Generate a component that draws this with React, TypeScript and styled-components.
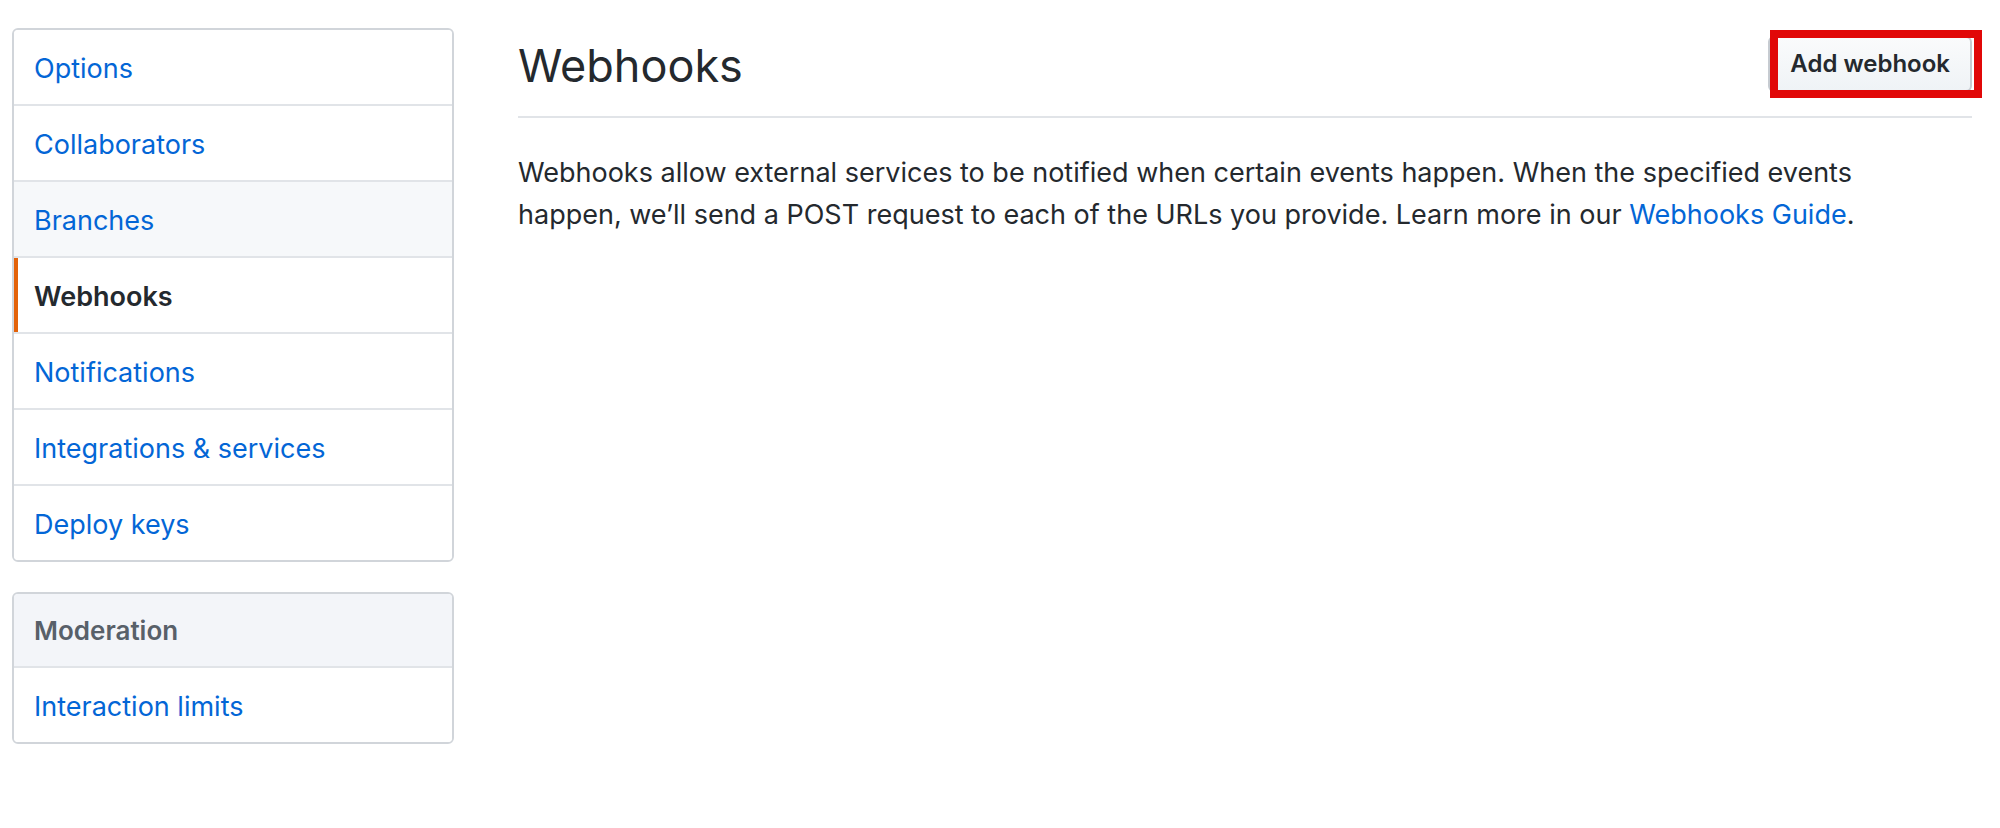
import React from "react";
import styled, { createGlobalStyle, css } from "styled-components";

const GlobalStyle = createGlobalStyle`
  *, *::before, *::after { box-sizing: border-box; }
  body {
    margin: 0;
    background: #fff;
    color: #24292e;
    font-family: Inter, "Liberation Sans", sans-serif;
    font-size: 27px;
    line-height: 42px;
  }
`;

const Page = styled.div`
  display: grid;
  grid-template-columns: 442px minmax(0, 1fr);
  column-gap: 64px;
  align-items: start;
  padding: 28px 28px 28px 12px;
`;

const Sidebar = styled.aside`
  display: flex;
  flex-direction: column;
  gap: 30px;
`;

const Menu = styled.nav`
  border: 2px solid #d1d5da;
  border-radius: 6px;
  overflow: hidden;
`;

const MenuHeading = styled.h2`
  margin: 0;
  padding: 16px 20px 14px;
  border-bottom: 2px solid #e1e4e8;
  background: #f3f5f9;
  color: #586069;
  font-size: 26px;
  font-weight: 600;
`;

const MenuItem = styled.a<{ $hovered?: boolean; $selected?: boolean }>`
  display: block;
  padding: 18px 20px 14px;
  border-bottom: 2px solid #e1e4e8;
  background: ${(p) => (p.$hovered ? "#f6f8fa" : "#fff")};
  color: #0366d6;
  text-decoration: none;

  &:last-child {
    border-bottom: 0;
  }

  ${(p) =>
    p.$selected &&
    css`
      color: #24292e;
      font-weight: 600;
      background: linear-gradient(#e36209, #e36209) left / 4px 100% no-repeat #fff;
      background-clip: padding-box;
    `}
`;

const Header = styled.header`
  display: flex;
  align-items: flex-start;
  justify-content: space-between;
  padding: 2px 0 14px;
  border-bottom: 2px solid #e1e4e8;
`;

const Title = styled.h1`
  margin: 0;
  font-size: 45px;
  font-weight: 400;
  line-height: 72px;
`;

const ActionSlot = styled.div`
  position: relative;
  margin-top: 6px;
`;

const Highlight = styled.span`
  position: absolute;
  inset: -6px -10px -6px 2px;
  border: 8px solid #e10808;
  pointer-events: none;
`;

const Button = styled.button`
  display: block;
  padding: 6px 20px;
  border: 2px solid #c6cbd1;
  border-radius: 6px;
  background: linear-gradient(#fafbfc, #eff3f6);
  color: #24292e;
  font: 600 24px/40px Inter, "Liberation Sans", sans-serif;
  cursor: pointer;
`;

const Intro = styled.p`
  margin: 0;
  padding: 34px 60px 0 0;
`;

const TextLink = styled.a`
  color: #0366d6;
  text-decoration: none;
`;

const settings = [
  { label: "Options" },
  { label: "Collaborators" },
  { label: "Branches", hovered: true },
  { label: "Webhooks", selected: true },
  { label: "Notifications" },
  { label: "Integrations & services" },
  { label: "Deploy keys" },
];

export default function App() {
  return (
    <>
      <GlobalStyle />
      <Page>
        <Sidebar>
          <Menu aria-label="Settings">
            {settings.map((item) => (
              <MenuItem
                key={item.label}
                href="#"
                $hovered={item.hovered}
                $selected={item.selected}
                aria-current={item.selected ? "page" : undefined}
              >
                {item.label}
              </MenuItem>
            ))}
          </Menu>
          <Menu aria-labelledby="moderation-heading">
            <MenuHeading id="moderation-heading">Moderation</MenuHeading>
            <MenuItem href="#">Interaction limits</MenuItem>
          </Menu>
        </Sidebar>
        <main>
          <Header>
            <Title>Webhooks</Title>
            <ActionSlot>
              <Button type="button">Add webhook</Button>
              <Highlight />
            </ActionSlot>
          </Header>
          <Intro>
            Webhooks allow external services to be notified when certain events happen. When the
            specified events happen, we’ll send a POST request to each of the URLs you provide.
            Learn more in our <TextLink href="#">Webhooks Guide</TextLink>.
          </Intro>
        </main>
      </Page>
    </>
  );
}
